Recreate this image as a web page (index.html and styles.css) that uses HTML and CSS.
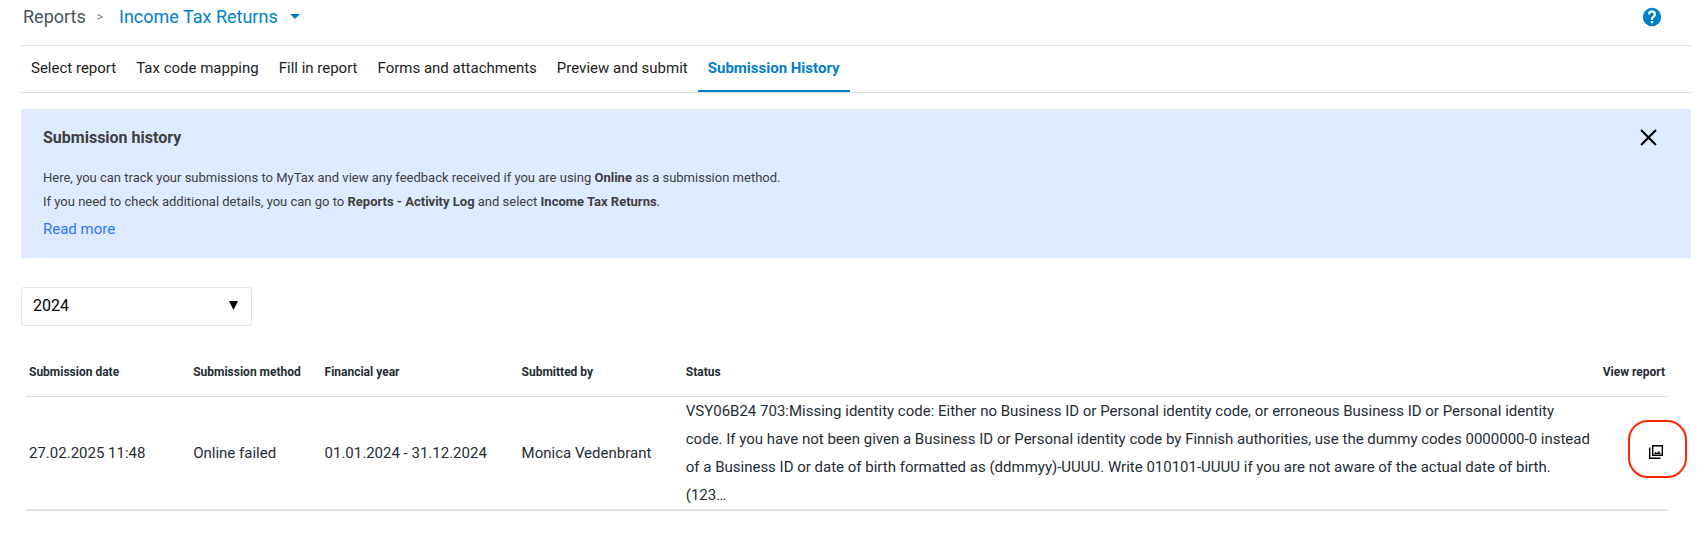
FILE: index.html
```html
<!DOCTYPE html>
<html lang="en">
<head>
<meta charset="utf-8">
<title>Income Tax Returns</title>
<link rel="stylesheet" href="styles.css">
</head>
<body>
<div class="page">
  <header class="topbar">
    <nav class="breadcrumb" aria-label="Breadcrumb">
      <a class="crumb" href="#">Reports</a>
      <span class="separator">&gt;</span>
      <button class="crumb-menu" type="button">Income Tax Returns
        <svg class="caret" viewBox="0 0 10 5" aria-hidden="true"><path d="M0 0h10L5 5z"/></svg>
      </button>
    </nav>
    <button class="icon-button" type="button" aria-label="Help">
      <svg class="help-icon" viewBox="0 0 24 24" aria-hidden="true"><path d="M12 1a11 11 0 1 0 0 22 11 11 0 0 0 0-22zm1.300 18.500h-2.600v-2.600h2.600zm2.500-8.200-1 1c-1 1-1.500 1.700-1.500 3.200h-2.600v-.7c0-1.300.5-2.400 1.400-3.300l1.400-1.400c.4-.4.600-.9.600-1.500a2.100 2.100 0 0 0-4.200 0H7.300a4.700 4.700 0 0 1 9.400 0c0 1-.4 2-.9 2.700z"/></svg>
    </button>
  </header>

  <nav class="tabs" aria-label="Report steps">
    <a class="tab" href="#">Select report</a>
    <a class="tab" href="#">Tax code mapping</a>
    <a class="tab" href="#">Fill in report</a>
    <a class="tab" href="#">Forms and attachments</a>
    <a class="tab" href="#">Preview and submit</a>
    <a class="tab tab-active" href="#" aria-current="page">Submission History</a>
  </nav>

  <section class="notice">
    <div class="notice-head">
      <h1 class="notice-title">Submission history</h1>
      <button class="icon-button" type="button" aria-label="Close">
        <svg class="close-icon" viewBox="0 0 16 16" aria-hidden="true"><path d="M1 1l14 14M15 1L1 15"/></svg>
      </button>
    </div>
    <p class="notice-text">Here, you can track your submissions to MyTax and view any feedback received if you are using <b>Online</b> as a submission method.</p>
    <p class="notice-text">If you need to check additional details, you can go to <b>Reports - Activity Log</b> and select <b>Income Tax Returns</b>.</p>
    <a class="read-more" href="#">Read more</a>
  </section>

  <div class="year-picker">
    <select class="year-select" aria-label="Year">
      <option>2024</option>
    </select>
    <svg class="year-arrow" viewBox="0 0 10 10" aria-hidden="true"><path d="M0 0h10L5 10z"/></svg>
  </div>

  <table class="history">
    <colgroup>
      <col class="col-date"><col class="col-method"><col class="col-year"><col class="col-by"><col class="col-status"><col class="col-view">
    </colgroup>
    <thead>
      <tr>
        <th>Submission date</th>
        <th>Submission method</th>
        <th>Financial year</th>
        <th>Submitted by</th>
        <th>Status</th>
        <th class="cell-view">View report</th>
      </tr>
    </thead>
    <tbody>
      <tr>
        <td>27.02.2025 11:48</td>
        <td>Online failed</td>
        <td>01.01.2024 - 31.12.2024</td>
        <td>Monica Vedenbrant</td>
        <td class="cell-status">VSY06B24 703:Missing identity code: Either no Business ID or Personal identity code, or erroneous Business ID or Personal identity<br>code. If you have not been given a Business ID or Personal identity code by Finnish authorities, use the dummy codes 0000000-0 instead<br>of a Business ID or date of birth formatted as (ddmmyy)-UUUU. Write 010101-UUUU if you are not aware of the actual date of birth.<br>(123…</td>
        <td class="cell-view">
          <button class="view-button" type="button" aria-label="View report">
            <svg class="view-icon" viewBox="0 0 14 14" aria-hidden="true"><path class="view-frame" d="M3.700.7h9.600v9.600H3.700zM.7 2.500v10.800h10.800"/><path d="M5 9l1.700-2.200 1.300 1.500L9.700 6 12 9z"/></svg>
          </button>
        </td>
      </tr>
    </tbody>
  </table>
</div>
</body>
</html>
```
FILE: styles.css
```css
* {
  box-sizing: border-box;
}

body {
  margin: 0;
  background: #fff;
  color: #1f2d35;
  font-family: Roboto, "Liberation Sans", sans-serif;
  font-size: 15px;
}

a {
  text-decoration: none;
}

button {
  padding: 0;
  border: 0;
  background: none;
  color: inherit;
  font: inherit;
  cursor: pointer;
}

svg {
  display: block;
}

.page {
  padding: 0 16px 48px 21px;
}

.topbar {
  display: flex;
  align-items: center;
  justify-content: space-between;
  height: 46px;
  padding: 0 29px 12px 2px;
  border-bottom: 1px solid #e0e0e0;
}

.breadcrumb {
  display: flex;
  align-items: center;
  font-size: 18px;
}

.crumb {
  color: #4a5459;
}

.separator {
  margin: 0 16px 0 11px;
  color: #808080;
  font-size: 12px;
}

.crumb-menu {
  display: flex;
  align-items: center;
  gap: 12px;
  color: #0080c9;
}

.caret {
  width: 10px;
  height: 5px;
  fill: #0080c9;
}

.help-icon {
  width: 20px;
  height: 20px;
  fill: #0080c9;
}

.tabs {
  display: flex;
  height: 47px;
  border-bottom: 1px solid #e0e0e0;
}

.tab {
  display: flex;
  align-items: center;
  padding: 0 10px;
  border-bottom: 2px solid transparent;
  color: #1c1c1c;
}

.tab-active {
  border-color: #0080c9;
  color: #0080c9;
  font-weight: 700;
}

.notice {
  margin-top: 16px;
  padding: 16px 34px 15px 22px;
  background: #deeaff;
  color: #404040;
}

.notice-head {
  display: flex;
  align-items: center;
  justify-content: space-between;
  height: 24px;
  margin-bottom: 17px;
}

.notice-title {
  margin: 0;
  font-size: 16px;
}

.close-icon {
  width: 17px;
  height: 17px;
  fill: none;
  stroke: #000;
  stroke-width: 2;
}

.notice-text {
  margin: 0;
  font-size: 13px;
  line-height: 24px;
}

.read-more {
  display: inline-block;
  margin-top: 1px;
  color: #2979ff;
  line-height: 28px;
}

.year-picker {
  position: relative;
  width: 231px;
  margin-top: 29px;
}

.year-select {
  display: block;
  width: 100%;
  height: 39px;
  padding: 0 32px 2px 11px;
  border: 1px solid #e4e4e4;
  border-radius: 3px;
  background: #fff;
  color: #000;
  font: inherit;
  font-size: 16px;
  appearance: none;
}

.year-arrow {
  position: absolute;
  top: 14px;
  right: 14px;
  width: 9px;
  height: 9px;
  pointer-events: none;
}

.history {
  width: calc(100% - 28px);
  margin: 23px 0 0 5px;
  border-collapse: collapse;
  table-layout: fixed;
}

.col-date,
.col-by {
  width: 10%;
}

.col-method {
  width: 8%;
}

.col-year {
  width: 12%;
}

.col-status {
  width: 55%;
}

.col-view {
  width: 5%;
}

.history th,
.history td {
  padding: 0 3px;
  text-align: left;
}

.history th {
  height: 47px;
  border-bottom: 1px solid #e0e0e0;
  font-size: 12px;
  white-space: nowrap;
}

.history td {
  border-bottom: 2px solid #e4e4e4;
  line-height: 28px;
}

.history .cell-status {
  white-space: nowrap;
}

.history .cell-view {
  text-align: right;
}

.history td.cell-view {
  padding: 0 0 8px;
}

.view-button {
  display: flex;
  align-items: center;
  justify-content: center;
  width: 59px;
  height: 58px;
  margin: 0 -19px 0 auto;
  border: 2px solid #ff2600;
  border-radius: 20px;
}

.view-icon {
  width: 14px;
  height: 14px;
  margin: 6px 3px 0 0;
}

.view-frame {
  fill: none;
  stroke: #000;
  stroke-width: 1.4;
}
```
